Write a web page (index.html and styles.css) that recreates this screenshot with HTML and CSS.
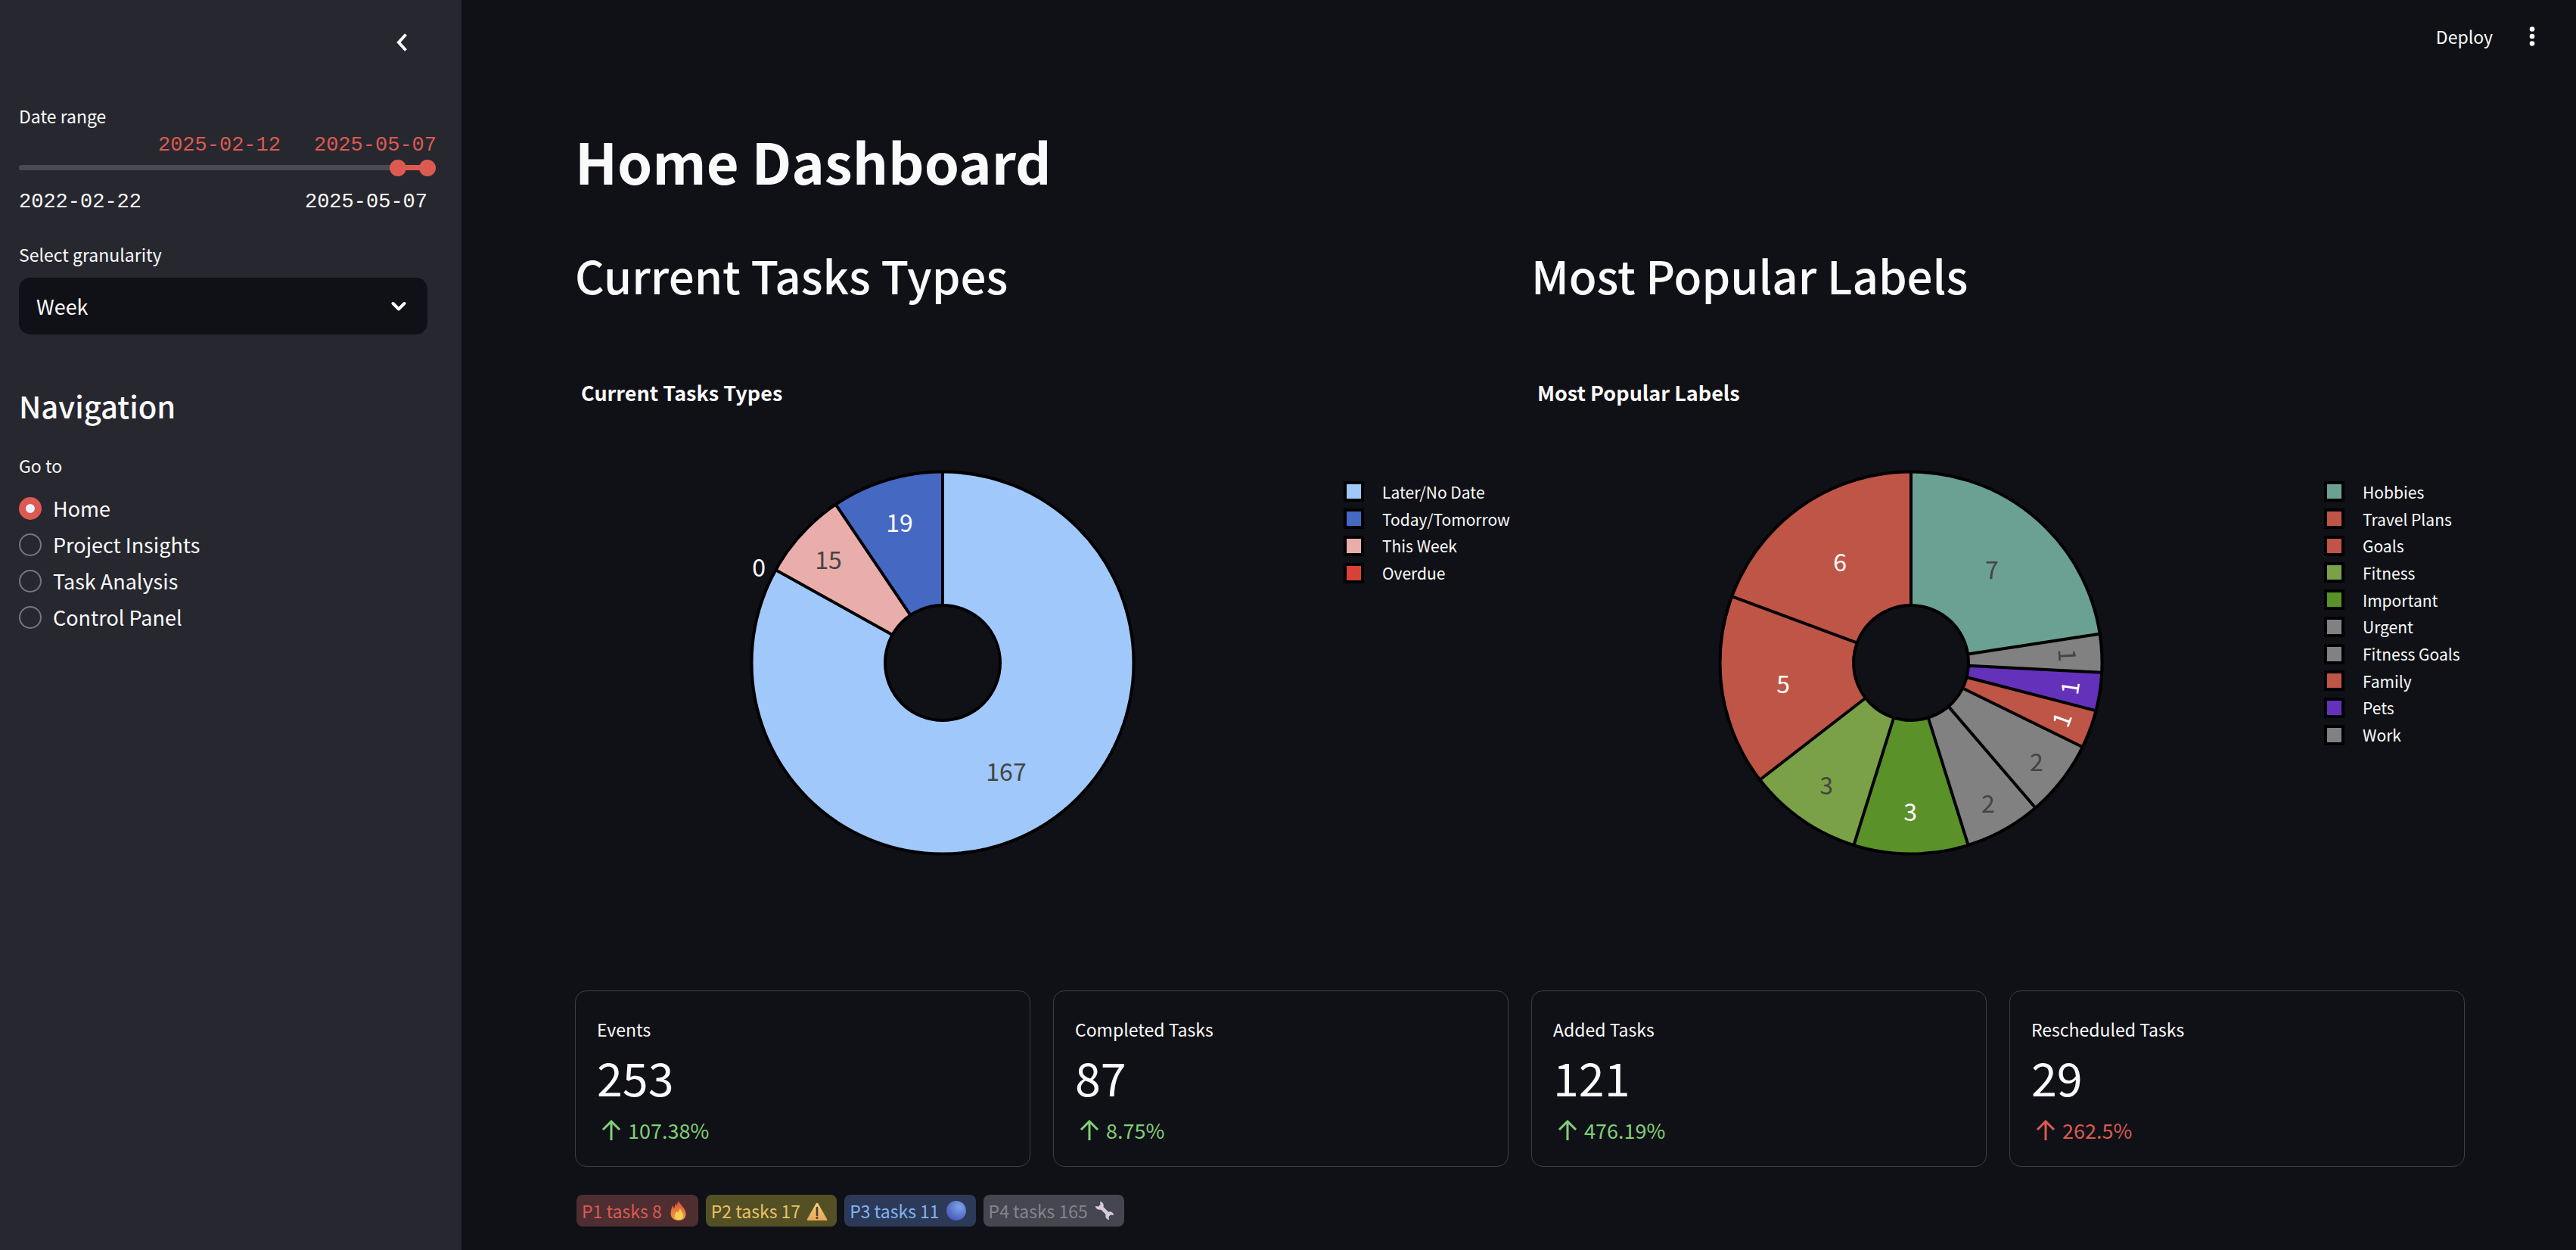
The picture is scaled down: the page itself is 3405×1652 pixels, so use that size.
FILE: index.html
```html
<!DOCTYPE html>
<html lang="en">
<head>
<meta charset="utf-8">
<meta name="viewport" content="width=device-width, initial-scale=1">
<title>Home Dashboard</title>
<link rel="stylesheet" href="styles.css">
</head>
<body>
<div class="app">
  <aside class="sidebar">
    <div class="sidebar-top">
      <button class="icon-button" type="button" aria-label="Collapse sidebar">
        <svg class="icon-collapse" viewBox="0 0 16 26" aria-hidden="true"><path d="M13.5 2.5 4 13l9.5 10.5" fill="none" stroke="currentColor" stroke-width="4"/></svg>
      </button>
    </div>

    <section class="range-field">
      <span class="field-label" id="range-label">Date range</span>
      <div class="range-values"><output for="range-from">2025-02-12</output><output for="range-to">2025-05-07</output></div>
      <div class="range" role="group" aria-labelledby="range-label">
        <div class="range-track"></div>
        <input class="range-input" id="range-from" type="range" min="0" max="1170" value="1086" aria-label="From date">
        <input class="range-input" id="range-to" type="range" min="0" max="1170" value="1170" aria-label="To date">
      </div>
      <div class="range-ticks"><span>2022-02-22</span><span>2025-05-07</span></div>
    </section>

    <section class="select-field">
      <label class="field-label" for="granularity">Select granularity</label>
      <div class="select-box">
        <select id="granularity"><option>Day</option><option selected>Week</option><option>Month</option></select>
        <svg class="icon-caret" viewBox="0 0 20 14" aria-hidden="true"><path d="M2.5 3 10 10.500 17.500 3" fill="none" stroke="currentColor" stroke-width="4" stroke-linecap="round" stroke-linejoin="round"/></svg>
      </div>
    </section>

    <h2 class="nav-title">Navigation</h2>
    <fieldset class="nav">
      <legend class="field-label">Go to</legend>
      <label class="nav-item"><input type="radio" name="page" checked>Home</label>
      <label class="nav-item"><input type="radio" name="page">Project Insights</label>
      <label class="nav-item"><input type="radio" name="page">Task Analysis</label>
      <label class="nav-item"><input type="radio" name="page">Control Panel</label>
    </fieldset>
  </aside>

  <div class="page">
    <header class="toolbar">
      <button class="deploy" type="button">Deploy</button>
      <button class="icon-button" type="button" aria-label="Menu">
        <svg class="icon-menu" viewBox="0 0 8 28" aria-hidden="true"><g fill="currentColor"><circle cx="4" cy="4.500" r="3.300"/><circle cx="4" cy="14" r="3.300"/><circle cx="4" cy="23.500" r="3.300"/></g></svg>
      </button>
    </header>

    <main class="content">
      <h1>Home Dashboard</h1>

      <div class="charts">
        <section class="chart">
          <h2>Current Tasks Types</h2>
          <h3>Current Tasks Types</h3>
          <div class="plot">
            <div class="plot-area">
              <!-- Each ring runs from twelve o'clock to its slice's end; later rings cover earlier ones. -->
              <svg class="pie" viewBox="-255 -255 510 510" role="img" aria-label="Current tasks types">
                <g class="slices" transform="rotate(-90)">
                  <circle r="164" stroke="#4568c3"/>
                  <circle r="164" pathLength="201" stroke="#e9aeac" stroke-dasharray="182 100"/>
                  <circle r="164" pathLength="201" stroke="#a0c8fb" stroke-dasharray="167 100"/>
                </g>
                <g class="outlines">
                  <circle r="252.500"/><circle r="76"/>
                  <path d="M0-76V-252"/>
                  <path d="M0-76V-252" transform="rotate(299.1)"/>
                  <path d="M0-76V-252" transform="rotate(325.97)"/>
                </g>
                <g class="slice-text">
                  <text class="dark" x="84" y="156">167</text>
                  <text class="dark" x="-151" y="-124">15</text>
                  <text x="-57" y="-173">19</text>
                  <text x="-243" y="-114">0</text>
                </g>
              </svg>
            </div>
            <ul class="legend legend-types">
              <li><i class="swatch sky"></i>Later/No Date</li>
              <li><i class="swatch blue"></i>Today/Tomorrow</li>
              <li><i class="swatch pink"></i>This Week</li>
              <li><i class="swatch scarlet"></i>Overdue</li>
            </ul>
          </div>
        </section>

        <section class="chart">
          <h2>Most Popular Labels</h2>
          <h3>Most Popular Labels</h3>
          <div class="plot">
            <div class="plot-area">
              <svg class="pie" viewBox="-255 -255 510 510" role="img" aria-label="Most popular labels">
                <g class="slices" transform="rotate(-90)">
                  <circle r="164" stroke="#bf5546"/>
                  <circle r="164" pathLength="31" stroke="#7aa148" stroke-dasharray="20 20"/>
                  <circle r="164" pathLength="31" stroke="#5a9128" stroke-dasharray="17 20"/>
                  <circle r="164" pathLength="31" stroke="#818181" stroke-dasharray="14 20"/>
                  <circle r="164" pathLength="31" stroke="#bf5546" stroke-dasharray="10 30"/>
                  <circle r="164" pathLength="31" stroke="#6431bb" stroke-dasharray="9 30"/>
                  <circle r="164" pathLength="31" stroke="#818181" stroke-dasharray="8 30"/>
                  <circle r="164" pathLength="31" stroke="#6ba193" stroke-dasharray="7 30"/>
                </g>
                <g class="outlines">
                  <circle r="252.500"/><circle r="76"/>
                  <path d="M0-76V-252"/>
                  <path d="M0-76V-252" transform="rotate(81.29)"/>
                  <path d="M0-76V-252" transform="rotate(92.9)"/>
                  <path d="M0-76V-252" transform="rotate(104.52)"/>
                  <path d="M0-76V-252" transform="rotate(116.13)"/>
                  <path d="M0-76V-252" transform="rotate(139.35)"/>
                  <path d="M0-76V-252" transform="rotate(162.58)"/>
                  <path d="M0-76V-252" transform="rotate(197.42)"/>
                  <path d="M0-76V-252" transform="rotate(232.26)"/>
                  <path d="M0-76V-252" transform="rotate(290.32)"/>
                </g>
                <g class="slice-text">
                  <text class="dark" x="107" y="-111">7</text>
                  <text x="-94" y="-121">6</text>
                  <text x="-169" y="40">5</text>
                  <text class="dark" x="-112" y="174">3</text>
                  <text x="-1" y="209">3</text>
                  <text class="dark" x="102" y="198">2</text>
                  <text class="dark" x="166" y="143">2</text>
                  <text transform="translate(199 75) rotate(-69.700)" y="12">1</text>
                  <text transform="translate(210 33) rotate(-81.300)" y="12">1</text>
                  <text class="dark" transform="translate(207 -10) rotate(87.100)" y="12">1</text>
                </g>
              </svg>
            </div>
            <ul class="legend legend-labels">
              <li><i class="swatch teal"></i>Hobbies</li>
              <li><i class="swatch brick"></i>Travel Plans</li>
              <li><i class="swatch brick"></i>Goals</li>
              <li><i class="swatch lime"></i>Fitness</li>
              <li><i class="swatch green"></i>Important</li>
              <li><i class="swatch gray"></i>Urgent</li>
              <li><i class="swatch gray"></i>Fitness Goals</li>
              <li><i class="swatch brick"></i>Family</li>
              <li><i class="swatch violet"></i>Pets</li>
              <li><i class="swatch gray"></i>Work</li>
            </ul>
          </div>
        </section>
      </div>

      <div class="metrics">
        <section class="metric">
          <div class="metric-label">Events</div>
          <div class="metric-value">253</div>
          <div class="metric-delta up"><svg viewBox="0 0 26 28" aria-hidden="true"><path d="M13 27V3M2 13 13 2l11 11"/></svg>107.38%</div>
        </section>
        <section class="metric">
          <div class="metric-label">Completed Tasks</div>
          <div class="metric-value">87</div>
          <div class="metric-delta up"><svg viewBox="0 0 26 28" aria-hidden="true"><path d="M13 27V3M2 13 13 2l11 11"/></svg>8.75%</div>
        </section>
        <section class="metric">
          <div class="metric-label">Added Tasks</div>
          <div class="metric-value">121</div>
          <div class="metric-delta up"><svg viewBox="0 0 26 28" aria-hidden="true"><path d="M13 27V3M2 13 13 2l11 11"/></svg>476.19%</div>
        </section>
        <section class="metric">
          <div class="metric-label">Rescheduled Tasks</div>
          <div class="metric-value">29</div>
          <div class="metric-delta bad"><svg viewBox="0 0 26 28" aria-hidden="true"><path d="M13 27V3M2 13 13 2l11 11"/></svg>262.5%</div>
        </section>
      </div>

      <div class="badges">
        <span class="badge p1">P1 tasks 8
          <svg viewBox="0 0 28 28" aria-hidden="true">
            <defs><linearGradient id="flame" x1="0" y1="0" x2="0" y2="1"><stop offset="0" stop-color="#d8502f"/><stop offset="1" stop-color="#f0a04a"/></linearGradient></defs>
            <path fill="url(#flame)" d="M14 1c1 4 7 8 9 14 2 7-2 12-9 12S2 22 4 15c0-3 1-5 2-8l2 4c1-2 1-4 2-7l1 3c1-2 2-4 3-6z"/>
            <path fill="#f5d04e" d="M16 11c1 3 4 6 4 10 0 3-2 5-6 5s-6-3-5-6c0-3 2-4 3-6l1 3c1-2 2-4 3-6z"/>
          </svg>
        </span>
        <span class="badge p2">P2 tasks 17
          <svg viewBox="0 0 28 28" aria-hidden="true">
            <defs><linearGradient id="warn" x1="0" y1="0" x2="0" y2="1"><stop offset="0" stop-color="#f5d36a"/><stop offset="1" stop-color="#e8a55c"/></linearGradient></defs>
            <path fill="url(#warn)" d="M12.700 4.600q1.300-1.800 2.600 0L27 25q.8 2-1.200 2H2.200Q.2 27 1 25z"/>
            <path d="M14 10v10" stroke="#4a3a42" stroke-width="2.600" stroke-linecap="round"/><circle cx="14" cy="23.500" r="1.600" fill="#4a3a42"/>
          </svg>
        </span>
        <span class="badge p3">P3 tasks 11
          <svg viewBox="0 0 28 28" aria-hidden="true">
            <defs><radialGradient id="ball" cx=".65" cy=".3" r=".75"><stop offset="0" stop-color="#7ba5e8"/><stop offset="1" stop-color="#4d58bb"/></radialGradient></defs>
            <circle cx="14" cy="14" r="13" fill="url(#ball)"/>
          </svg>
        </span>
        <span class="badge p4">P4 tasks 165
          <svg viewBox="0 0 28 28" aria-hidden="true">
            <path d="M8 8 20 20" stroke="#d6cce0" stroke-width="4.600"/>
            <path d="M8 1.800A5.500 5.500 0 1 1 1.800 8L6 8.500 8.500 6z" fill="#d6cce0"/>
            <path d="M20 26.200A5.500 5.500 0 1 1 26.200 20L22 19.500 19.500 22z" fill="#d6cce0"/>
          </svg>
        </span>
      </div>
    </main>
  </div>
</div>
</body>
</html>
```

FILE: styles.css
```css
:root {
  --bg: #101116;
  --panel: #27272f;
  --text: #fafafa;
  --accent: #dc5a51;
  --ui-font: "Noto Sans CJK SC", "Noto Sans", sans-serif;
  --mono-font: "Liberation Mono", monospace;
}

* { box-sizing: border-box; }

body {
  margin: 0;
  background: var(--bg);
  color: var(--text);
  font: 400 27px/40px var(--ui-font);
}

h1, h2, h3, ul, fieldset { margin: 0; padding: 0; border: 0; }

button, select {
  border: 0;
  padding: 0;
  background: none;
  color: inherit;
  font: inherit;
}

svg { display: block; flex: none; }

.app { display: flex; min-height: 100vh; }

/* Sidebar */
.sidebar {
  flex: none;
  width: 610px;
  padding: 0 45px 40px 25px;
  background: var(--panel);
}

.sidebar-top {
  display: flex;
  justify-content: flex-end;
  align-items: center;
  height: 111px;
  padding-right: 26px;
  margin-bottom: 24px;
}

.icon-button { display: block; }
.icon-collapse { width: 16px; height: 26px; }

.field-label {
  display: block;
  padding: 0;
  font-size: 23px;
  line-height: 36px;
}

.range-values, .range-ticks {
  display: flex;
  font: 27px/32px var(--mono-font);
}

.range-values {
  justify-content: flex-end;
  gap: 44px;
  margin: 5px -12px 0 0;
  color: var(--accent);
}

.range-ticks { justify-content: space-between; margin-top: 15px; }

.range { position: relative; height: 28px; }

.range-track {
  position: absolute;
  inset: 10px 0 11px;
  border-radius: 4px;
  background: linear-gradient(90deg, #4b4a54 93%, var(--accent) 93%);
}

.range-input {
  position: absolute;
  inset: 0 -11px;
  width: calc(100% + 22px);
  height: 28px;
  margin: 0;
  appearance: none;
  background: none;
  pointer-events: none;
}

.range-input::-webkit-slider-thumb {
  appearance: none;
  width: 22px;
  height: 22px;
  border: 0;
  border-radius: 50%;
  background: var(--accent);
  pointer-events: auto;
}

.select-field { margin-top: 35px; }

.select-box {
  display: grid;
  align-items: center;
  margin-top: 13px;
  border-radius: 15px;
  background: var(--bg);
}

.select-box > * { grid-area: 1 / 1; }

.select-box select {
  width: 100%;
  height: 75px;
  padding: 0 23px;
  appearance: none;
}

.icon-caret {
  justify-self: end;
  width: 20px;
  height: 14px;
  margin-right: 28px;
  pointer-events: none;
}

.nav-title {
  margin-top: 66px;
  font-size: 40px;
  line-height: 56px;
  font-weight: 500;
}

.nav { margin-top: 33px; }
.nav legend { margin-bottom: 15px; }

.nav-item {
  display: flex;
  align-items: center;
  gap: 15px;
  height: 48px;
}

.nav-item input {
  width: 30px;
  height: 30px;
  margin: 0;
  appearance: none;
  border: 2px solid #76767b;
  border-radius: 50%;
}

.nav-item input:checked {
  border: 9px solid var(--accent);
  background: #eff1f8;
}

/* Page */
.page { flex: 1; min-width: 0; }

.toolbar {
  display: flex;
  justify-content: flex-end;
  align-items: center;
  gap: 48px;
  height: 95px;
  padding-right: 54px;
}

.deploy { font-size: 23px; line-height: 36px; }
.icon-menu { width: 8px; height: 28px; }

.content { padding: 67px 147px 31px 150px; }

h1 { font-size: 74px; line-height: 100px; font-weight: 700; }

.charts {
  display: grid;
  grid-template-columns: 1fr 1fr;
  gap: 30px;
  margin-top: 61px;
}

.chart { min-width: 0; }
.chart h2 { font-size: 60px; line-height: 80px; font-weight: 500; }

.chart h3 {
  margin-top: 96px;
  padding-left: 8px;
  font-size: 27px;
  line-height: 40px;
  font-weight: 700;
}

.plot { display: flex; margin-top: 82px; }
.plot-area { flex: 1; min-width: 0; }
.pie { width: 100%; max-width: 510px; margin: 0 auto; }
.slices circle { fill: none; stroke-width: 176; }
.outlines * { fill: none; stroke: #000; stroke-width: 4; }
.slice-text { font-size: 32px; text-anchor: middle; fill: #fff; }
.slice-text .dark { fill: #444; }

.legend {
  display: flex;
  flex-direction: column;
  flex: none;
  margin: 11px 0 0 44px;
  font-size: 21px;
  line-height: 32px;
  list-style: none;
}

.legend-types { width: 218px; height: 143px; }
.legend-labels { width: 186px; height: 357px; }

.legend li {
  display: flex;
  flex: 1;
  align-items: center;
  gap: 24px;
  white-space: nowrap;
}

.swatch {
  flex: none;
  width: 27px;
  height: 27px;
  border: 4px solid #000;
}

.sky { background: #a0c8fb; }
.blue { background: #4568c3; }
.pink { background: #e9aeac; }
.scarlet { background: #d84137; }
.teal { background: #6ba193; }
.brick { background: #bf5546; }
.lime { background: #7aa148; }
.green { background: #5a9128; }
.gray { background: #818181; }
.violet { background: #6431bb; }

/* Metrics */
.metrics {
  display: grid;
  grid-template-columns: repeat(4, 1fr);
  gap: 30px;
  margin-top: 178px;
}

.metric {
  padding: 32px 28px 27px;
  border: 1px solid #3e3f45;
  border-radius: 15px;
}

.metric-label { font-size: 23px; line-height: 36px; }
.metric-value { margin-top: 5px; font-size: 61px; line-height: 80px; }

.metric-delta {
  display: flex;
  align-items: center;
  gap: 9px;
  margin-top: 11px;
  padding-left: 6px;
}

.metric-delta svg {
  width: 26px;
  height: 28px;
  fill: none;
  stroke: currentColor;
  stroke-width: 3;
}

.up { color: #81d079; }
.bad { color: var(--accent); }

/* Priority badges */
.badges { display: flex; gap: 10px; margin-top: 37px; padding-left: 2px; }

.badge {
  display: flex;
  align-items: center;
  gap: 8px;
  height: 42px;
  padding: 0 12px 0 7px;
  border-radius: 8px;
  font-size: 23px;
  line-height: 36px;
}

.badge svg { width: 28px; height: 28px; }

.p1 { background: #4e2e31; color: #dc5a51; }
.p2 { background: #535026; color: #eac163; }
.p3 { background: #2c3a57; color: #83b2f5; }
.p4 { background: #45464f; color: #83848e; }
```
